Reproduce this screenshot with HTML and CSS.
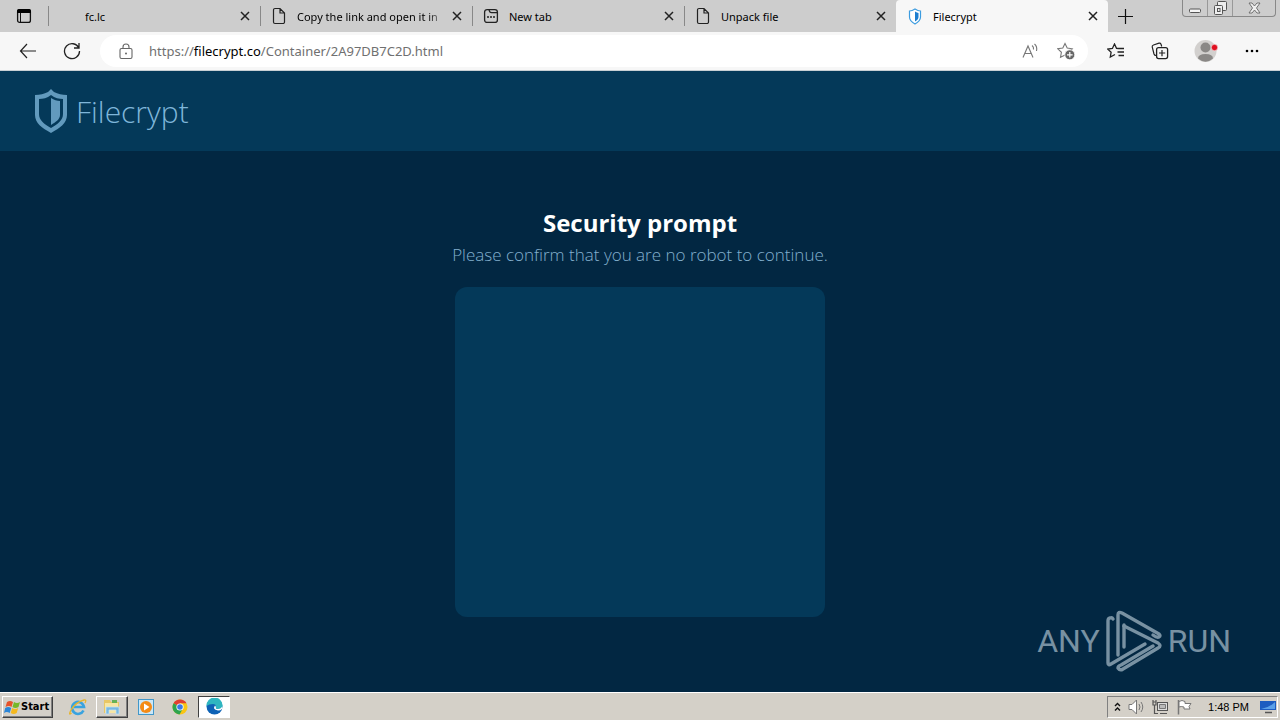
FILE: index.html
```html
<!DOCTYPE html>
<html lang="en">
<head>
    <meta charset="UTF-8">
    <meta name="viewport" content="width=device-width, initial-scale=1.0">
    <title>Filecrypt</title>
    <link rel="stylesheet" href="styles.css">
</head>
<body>
    <!-- Shared icons -->
    <svg class="defs" width="0" height="0" aria-hidden="true">
        <symbol id="close" viewBox="0 0 10 10"><path d="M1 1l8 8M9 1l-8 8" fill="none" stroke="#222" stroke-width="1.5"/></symbol>
        <symbol id="file" viewBox="0 0 14 18"><path d="M3 1.500h5l4.500 4.500v9a1.500 1.500 0 0 1-1.500 1.500H3A1.500 1.500 0 0 1 1.500 15V3A1.500 1.500 0 0 1 3 1.500zM8 1.500V6h4.500" fill="none" stroke="#222" stroke-width="1.200"/></symbol>
        <symbol id="shield" viewBox="0 0 34 44"><path fill-rule="evenodd" d="M17 0l3 3c4 2 8 3 13 3v20c0 8-7 13-16 18C8 39 1 34 1 26V6c5 0 9-1 13-3zM17 6C13 9 9 10 5 10v15c0 6 5 10 12 14 7-4 12-8 12-14V10c-4 0-8-1-12-4z"/><path d="M17 9c3 2 6 3 9 3v14c0 4-4 7-9 10z"/></symbol>
    </svg>

    <div class="desktop">
        <div class="tab-strip">
            <button class="tab-menu" aria-label="Tab actions">
                <svg width="16" height="16" viewBox="0 0 16 16"><rect x="1.600" y="1.600" width="12.800" height="12.800" rx="2" fill="none" stroke="#111" stroke-width="1.300"/><path d="M1 5V3q0-2 2-2h10q2 0 2 2v2z"/><path d="M4.500 5v9.500" stroke="#111"/></svg>
            </button>
            <div class="tab">
                <span class="tab-icon"></span>
                <span class="tab-title">fc.lc</span>
                <button class="tab-close" aria-label="Close fc.lc"><svg width="10" height="10"><use href="#close"/></svg></button>
            </div>
            <div class="tab">
                <span class="tab-icon"><svg width="14" height="18"><use href="#file"/></svg></span>
                <span class="tab-title faded">Copy the link and open it in</span>
                <button class="tab-close" aria-label="Close Copy the link"><svg width="10" height="10"><use href="#close"/></svg></button>
            </div>
            <div class="tab">
                <span class="tab-icon"><svg width="16" height="16" viewBox="0 0 16 16"><rect x="1.600" y="1.600" width="12.800" height="12.800" rx="2.500" fill="none" stroke="#222" stroke-width="1.300"/><path d="M6 1.600q.5 3 2.500 3h6" fill="none" stroke="#222" stroke-width="1.200"/><path d="M4 9h2M7 9h2M10 9h2" stroke="#222" stroke-width="1.500"/></svg></span>
                <span class="tab-title">New tab</span>
                <button class="tab-close" aria-label="Close New tab"><svg width="10" height="10"><use href="#close"/></svg></button>
            </div>
            <div class="tab">
                <span class="tab-icon"><svg width="14" height="18"><use href="#file"/></svg></span>
                <span class="tab-title">Unpack file</span>
                <button class="tab-close" aria-label="Close Unpack file"><svg width="10" height="10"><use href="#close"/></svg></button>
            </div>
            <div class="tab active">
                <span class="tab-icon"><svg width="14" height="17" viewBox="0 0 14 17"><path d="M7 1q3 2 5.500 2v6q0 4-5.500 7-5.500-3-5.500-7V3Q4 3 7 1z" fill="#fff" stroke="#3c9ce0" stroke-width="1.200"/><path d="M7 3.500q2 1.300 3.500 1.500V9q0 2.500-3.500 4.500z" fill="#1c7ed0"/></svg></span>
                <span class="tab-title">Filecrypt</span>
                <button class="tab-close" aria-label="Close Filecrypt"><svg width="10" height="10"><use href="#close"/></svg></button>
            </div>
            <button class="new-tab" aria-label="New tab">
                <svg width="15" height="15" viewBox="0 0 15 15"><path d="M7.500 0v15M0 7.500h15" stroke="#111" stroke-width="1.200"/></svg>
            </button>
            <div class="window-buttons">
                <button aria-label="Minimize"><svg width="14" height="14" viewBox="0 0 14 14"><rect x="1.500" y="8" width="11" height="3.500" rx="1" fill="#f5f5f5" stroke="#555"/></svg></button>
                <button aria-label="Restore"><svg width="14" height="14" viewBox="0 0 14 14" fill="#eee" stroke="#555"><rect x="4.500" y=".5" width="9" height="9" rx="1"/><rect x="1.500" y="4.500" width="8" height="9" rx="1"/><rect x="4.500" y="7.500" width="2.500" height="3"/></svg></button>
                <button class="wide" aria-label="Close window"><svg width="13" height="12" viewBox="0 0 13 12"><path d="M1 1h3l2.500 3L9 1h3L8.500 6l3.500 5H9L6.500 8 4 11H1l3.500-5z" fill="#eee" stroke="#666" stroke-width=".9"/></svg></button>
            </div>
        </div>

        <div class="toolbar">
            <button aria-label="Back"><svg width="18" height="16" viewBox="0 0 18 16"><path d="M8 1L1.500 8 8 15M1.500 8H17" fill="none" stroke="#222" stroke-width="1.200"/></svg></button>
            <button aria-label="Refresh"><svg width="18" height="18" viewBox="0 0 18 18"><path d="M15.800 6A7.500 7.500 0 1 0 16.500 9M16 1v5h-5" fill="none" stroke="#222" stroke-width="1.300"/></svg></button>
            <form class="address">
                <svg width="14" height="17" viewBox="0 0 14 17"><rect x="1" y="5.500" width="12" height="10" rx="1.500" fill="none" stroke="#666" stroke-width="1.100"/><path d="M4 5.500V4q0-3 3-3t3 3v1.500" fill="none" stroke="#666" stroke-width="1.100"/><circle cx="7" cy="10.500" r="1" fill="#666"/></svg>
                <div class="url" role="textbox" aria-label="Address" contenteditable="true" spellcheck="false">https://<b>filecrypt.co</b>/Container/2A97DB7C2D.html</div>
                <button type="button" aria-label="Read aloud"><svg width="17" height="16" viewBox="0 0 17 16"><path d="M1 14.500L6 3l5 11.500M2.800 10.500h6.500M10 2.500q2 1.500 1.500 4M12.500 1q3 2.500 2 7" fill="none" stroke="#777" stroke-width="1.100"/></svg></button>
                <button type="button" aria-label="Add to favorites"><svg width="18" height="18" viewBox="0 0 18 18"><path d="M8 1.500l2.200 4.600 5 .7-3.700 3.500.8 4.700L8 13l-4.500 2.300.9-5L.8 6.800l5-.7z" fill="none" stroke="#777" stroke-width="1.100"/><circle cx="12.800" cy="12.800" r="5" fill="#666" stroke="#fff" stroke-width=".8"/><path d="M12.800 10v5.600M10 12.800h5.600" stroke="#fff" stroke-width="1.200"/></svg></button>
            </form>
            <button aria-label="Favorites"><svg width="18" height="16" viewBox="0 0 18 16"><path d="M11.500 5.500l-2-.2L7.500 1 5.400 5.500l-4.600.6 3.300 3.200-.8 4.700 4.700-2.500M11.500 5.500h5.500M10.500 9H17M11.500 12.500H17" fill="none" stroke="#222" stroke-width="1.300"/></svg></button>
            <button aria-label="Collections"><svg width="18" height="18" viewBox="0 0 18 18"><path d="M5 13.500q-1.500 0-2-1.500L1.200 5Q1 3.500 2.500 3L8 1.200q1.500-.3 2 1l.7 2.300" fill="none" stroke="#222" stroke-width="1.200"/><rect x="5.600" y="5.600" width="11" height="11" rx="2" fill="none" stroke="#222" stroke-width="1.300"/><path d="M11 8v6.200M8 11h6.200" stroke="#222" stroke-width="1.200"/></svg></button>
            <button class="profile" aria-label="Profile"><svg width="24" height="24" viewBox="0 0 24 24"><circle cx="11.500" cy="12" r="11" fill="#d2d0ce"/><circle cx="11.500" cy="8.500" r="5" fill="#8a8886"/><path d="M4 19.500Q4 15 11.500 15t7.500 4.500q-7.500 6.500-15 0z" fill="#8a8886"/><circle cx="20.500" cy="8.500" r="3.200" fill="#e01020" stroke="#f7f7f7" stroke-width=".6"/></svg></button>
            <button aria-label="Settings and more"><svg width="14" height="4" viewBox="0 0 14 4"><circle cx="2" cy="2" r="1.300"/><circle cx="7" cy="2" r="1.300"/><circle cx="12" cy="2" r="1.300"/></svg></button>
        </div>

        <div class="page">
            <header class="site-header">
                <a class="brand" href="#"><svg width="34" height="44" fill="#629abd"><use href="#shield"/></svg><span>Filecrypt</span></a>
            </header>
            <main class="prompt">
                <h1>Security prompt</h1>
                <p>Please confirm that you are no robot to continue.</p>
                <div class="captcha"></div>
            </main>
            <div class="watermark">
                <span>ANY</span>
                <svg width="56" height="62" viewBox="0 0 56 62" fill="none" stroke="#7891a2" stroke-width="3.400" stroke-linejoin="round" stroke-linecap="round">
                    <path d="M7 9q-1-2-3-1-2 0-2 3v42q0 3 3 1l34-20"/>
                    <path d="M12 45V5q0-4 4-2l37 21q2 2 0 3-2 1-6-2"/>
                    <path d="M18 15v22"/>
                    <path d="M18 16l34 17q4 3 0 5L17 59q-3 2-5-1 0-2 3-3l32-19"/>
                </svg>
                <span>RUN</span>
            </div>
        </div>

        <div class="taskbar">
            <button class="start"><svg width="17" height="16" viewBox="0 0 17 16"><path d="M3 3q3-2 6 0L7.500 8Q5 6 1.500 8z" fill="#e6532b"/><path d="M10 3q3 2 6 0l-1.500 5q-3 2-6 0z" fill="#76b82a"/><path d="M1.200 9q3-2 6 0l-1.500 5q-3-2-5.700 0z" fill="#2b86d8"/><path d="M8.200 9q3 2 6 0l-1.500 5q-3 2-6 0z" fill="#f5b91e"/></svg>Start</button>
            <button class="task" aria-label="Internet Explorer"><svg width="18" height="18" viewBox="0 0 18 18"><path d="M14.500 12.500A6 6 0 1 1 15 9H5" fill="none" stroke="#39a3df" stroke-width="2.600"/><path d="M2.500 15Q-1 18 2 12 7 4 15 2q3-.5 1 3" fill="none" stroke="#e7b52d" stroke-width="1.300"/></svg></button>
            <button class="task raised" aria-label="Explorer"><svg width="20" height="18" viewBox="0 0 20 18"><path d="M2 2h6l1 2h8v11H2z" fill="#e8c766"/><path d="M3 5h13v10H3z" fill="#f7e6a4"/><path d="M10 2h5v3h-5z" fill="#66b257"/><path d="M4 16V9h13v7h-3v-4H7v4z" fill="#78b9e2" stroke="#c7e4f5" stroke-width=".7"/></svg></button>
            <button class="task" aria-label="Media Player"><svg width="16" height="16" viewBox="0 0 16 16"><rect x=".5" y=".5" width="15" height="15" fill="#cbe7f7" stroke="#4197c9"/><circle cx="8" cy="8" r="6" fill="#f48b16"/><path d="M6 4.500v7L11.500 8z" fill="#fff"/></svg></button>
            <button class="task" aria-label="Chrome"><svg width="16" height="16" viewBox="0 0 16 16"><circle cx="8" cy="8" r="7.500" fill="#f9c513"/><path d="M8 8L1.500 4.200A7.500 7.500 0 0 1 14.500 4.200H8z" fill="#df3e32"/><path d="M8 8L1.500 4.200A7.500 7.500 0 0 0 7.500 15.500L11 9.500z" fill="#2da44e"/><circle cx="8" cy="8" r="3.600" fill="#fff"/><circle cx="8" cy="8" r="2.800" fill="#3979e6"/></svg></button>
            <button class="task pressed" aria-label="Edge"><svg width="17" height="17" viewBox="0 0 17 17"><circle cx="8.500" cy="8.500" r="8" fill="#0d62b5"/><path d="M.5 8A8 8 0 0 1 16.500 7q.5 4-4.500 4-3 0-2-2 0-3-3-3-4 0-6.500 2z" fill="#2fb6c0"/><path d="M9 7.500q-3 4 3 5 2.500 0 4-1.500l.5-3Q15 11 12 11q-3 0-2-2z" fill="#fff"/></svg></button>
            <div class="tray">
                <svg width="7" height="10" viewBox="0 0 7 10"><path d="M1 4l2.500-2.500L6 4M1 8.500L3.500 6 6 8.500" fill="none" stroke="#111" stroke-width="1.400"/></svg>
                <svg width="17" height="16" viewBox="0 0 17 16" stroke="#777"><path d="M1 5.500h3L8.500 1v14L4 10.500H1z" fill="#fff"/><path d="M11 5q2 3 0 6M13 3q3.500 5 0 10" fill="none"/></svg>
                <svg width="17" height="16" viewBox="0 0 17 16"><rect x="5.500" y="3.500" width="10" height="8" fill="#ddd" stroke="#555"/><path d="M7.500 5.500h6v4h-6z" fill="#bbb" stroke="#777"/><path d="M8 14.500h7M2.500 6v8.500H6M1 1v2h3V1M1 3v3h3V3" fill="none" stroke="#555" stroke-width="1.200"/></svg>
                <svg width="17" height="16" viewBox="0 0 17 16"><path d="M2.500 1v14.500" stroke="#777" stroke-width="1.500"/><path d="M3 2.500q3-2 6 0v2h6l-2 3 1 2.500H8v-2q-3-1-5 0z" fill="#fff" stroke="#777"/></svg>
                <time>1:48 PM</time>
                <svg width="16" height="14" viewBox="0 0 16 14"><path d="M0 1h16v9H0z" fill="#1d5cc0"/><path d="M1 9q8-1 14-7v7z" fill="#5ba0e8"/><path d="M5 12.500h7" stroke="#555" stroke-width="1.500"/></svg>
            </div>
        </div>
    </div>
</body>
</html>
```
FILE: styles.css
```css
* {
    box-sizing: border-box;
}

body {
    margin: 0;
    font-family: 'Noto Sans', 'Open Sans', sans-serif;
    background: #022742;
}

button {
    display: flex;
    align-items: center;
    justify-content: center;
    padding: 0;
    border: none;
    background: none;
    font: inherit;
    flex-shrink: 0;
}

svg {
    display: block;
    flex-shrink: 0;
}

.defs {
    position: absolute;
}

.desktop {
    min-height: 100vh;
    display: flex;
    flex-direction: column;
}

/* Tabs */
.tab-strip {
    display: flex;
    height: 32px;
    background: #cdcdcd;
}

.tab-menu {
    width: 48px;
}

.tab {
    flex: 0 1 212px;
    min-width: 0;
    display: flex;
    align-items: center;
    gap: 10px;
    padding: 0 10px 0 11px;
    font-size: 11px;
    background: linear-gradient(#888, #888) left center / 1px 20px no-repeat;
}

.tab.active {
    background: #f7f7f7;
    border-radius: 4px 4px 0 0;
}

.tab-icon {
    width: 16px;
    display: flex;
    justify-content: center;
}

.tab-title {
    flex: 1;
    margin-right: -6px;
    overflow: hidden;
    white-space: nowrap;
}

.faded {
    mask-image: linear-gradient(to right, #000 86%, transparent);
}

.new-tab {
    width: 34px;
}

.window-buttons {
    display: flex;
    align-self: flex-start;
    margin: 0 4px 0 auto;
    border: 1px solid #888;
    border-top: none;
    border-radius: 0 0 4px 4px;
}

.window-buttons button {
    width: 25px;
    height: 16px;
    border-right: 1px solid #999;
}

.window-buttons .wide {
    width: 42px;
    border-right: none;
}

/* Toolbar */
.toolbar {
    display: flex;
    align-items: center;
    height: 39px;
    padding: 0 6px;
    background: #f7f7f7;
    border-bottom: 1px solid #c8d0d4;
}

.toolbar button {
    width: 44px;
    height: 32px;
}

.toolbar .profile {
    width: 48px;
}

.address {
    flex: 1;
    display: flex;
    align-items: center;
    height: 32px;
    margin: 0 6px;
    padding: 0 4px 0 19px;
    border-radius: 16px;
    background: #fff;
}

.toolbar .address button {
    width: 36px;
}

.url {
    flex: 1;
    margin-left: 16px;
    font-size: 13px;
    color: #707070;
    white-space: nowrap;
}

.url b {
    font-weight: 400;
    color: #000;
}

/* Page */
.page {
    position: relative;
    flex: 1;
    font-family: 'Open Sans', sans-serif;
}

.site-header {
    display: flex;
    align-items: center;
    height: 80px;
    padding: 0 34px;
    background: #043959;
}

.brand {
    display: flex;
    align-items: center;
    gap: 8px;
    font-size: 30px;
    font-weight: 300;
    color: #7fb6d9;
    text-decoration: none;
}

.prompt {
    padding-top: 56px;
    text-align: center;
}

.prompt h1 {
    margin: 0;
    font-size: 24px;
    line-height: 32px;
    color: #fff;
}

.prompt p {
    margin: 4px 0 20px;
    font-size: 17px;
    font-weight: 300;
    line-height: 24px;
    color: #84b0ce;
}

.captcha {
    width: 370px;
    height: 330px;
    margin: 0 auto;
    border-radius: 12px;
    background: #043959;
}

.watermark {
    position: absolute;
    right: 49px;
    bottom: 20px;
    display: flex;
    align-items: center;
    gap: 6px;
    font-family: 'Roboto', sans-serif;
    font-size: 32px;
    color: #7891a2;
}

/* Taskbar */
.taskbar {
    display: flex;
    align-items: center;
    height: 28px;
    padding: 0 2px;
    background: #d4d0c8;
    border-top: 1px solid #fff;
}

.start,
.raised {
    border: 1px solid;
    border-color: #fff #404040 #404040 #fff;
    box-shadow: inset -1px -1px #808080;
}

.start {
    height: 22px;
    padding: 0 3px 0 1px;
    margin-right: 9px;
    font: bold 11px 'DejaVu Sans Condensed', 'DejaVu Sans', sans-serif;
}

.task {
    width: 32px;
    height: 22px;
    margin-right: 2px;
}

.pressed {
    border: 1px solid;
    border-color: #404040 #fff #fff #404040;
    background: #fff;
}

.tray {
    display: flex;
    align-items: center;
    gap: 7px;
    height: 22px;
    margin-left: auto;
    padding: 0 1px 0 6px;
    border: 1px solid;
    border-color: #808080 #fff #fff #808080;
    font: 11px 'Liberation Sans', sans-serif;
}

.tray time {
    margin: 0 4px 0 8px;
}
```
